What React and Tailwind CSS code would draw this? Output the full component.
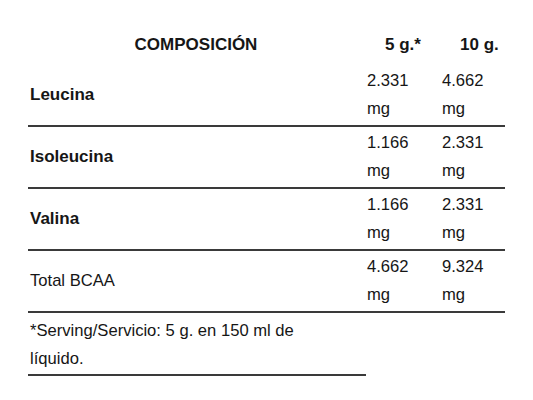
const ROWS = [
  { name: "Leucina", bold: true, a: "2.331", b: "4.662" },
  { name: "Isoleucina", bold: true, a: "1.166", b: "2.331" },
  { name: "Valina", bold: true, a: "1.166", b: "2.331" },
  { name: "Total BCAA", bold: false, a: "4.662", b: "9.324" },
];

function Value({ v }) {
  return (
    <div className="pl-[3px]">
      {v}
      <br />
      mg
    </div>
  );
}

export default function App() {
  return (
    <div
      className="min-h-[400px] w-[533px] bg-white pt-[31px] text-[16.6px] leading-[28px] text-[#161616]"
      style={{ fontFamily: '"Liberation Sans", Arial, sans-serif' }}
    >
      <div className="ml-[28px] w-[477px]">
        <div className="grid grid-cols-[336px_75px_66px] pb-[6px] text-[17px] font-bold">
          <div className="text-center">COMPOSICIÓN</div>
          <div className="pl-[21px]">5 g.*</div>
          <div className="pl-[21px]">10 g.</div>
        </div>

        {ROWS.map((r) => (
          <div
            key={r.name}
            className="grid grid-cols-[336px_75px_66px] border-b-2 border-[#3a3a3a] py-[2px]"
          >
            <div
              className={`flex items-center pl-[2px] ${r.bold ? "text-[17px] font-bold" : ""}`}
            >
              {r.name}
            </div>
            <Value v={r.a} />
            <Value v={r.b} />
          </div>
        ))}

        <div className="w-[338px] border-b-2 border-[#3a3a3a] pb-[1px] pl-[2px] pt-[4px]">
          *Serving/Servicio: 5 g. en 150 ml de
          <br />
          líquido.
        </div>
      </div>
    </div>
  );
}
